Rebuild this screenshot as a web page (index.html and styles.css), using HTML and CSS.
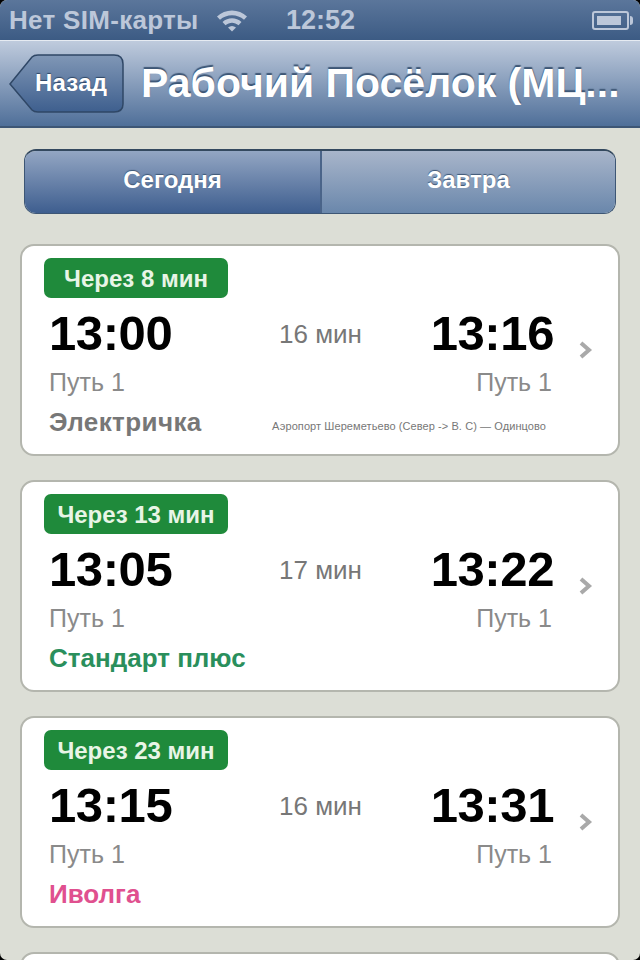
FILE: index.html
```html
<!DOCTYPE html>

<html>
  <head>
    <meta charset="utf-8" />
    <title>Расписание</title>
    <link rel="stylesheet" href="styles.css">
  </head>

  <body>
    <div class="screen">
      <div class="status">
        <div class="carrier">
          <span>Нет SIM-карты</span>
          <svg class="wifi" width="32" height="24" viewBox="0 0 32 24">
            <path d="M1 8.5C9 0.5 23 0.5 31 8.5L28 11.8C21.5 5.6 10.500 5.600 4 11.800Z" />
            <path d="M6.500 14C12 9 20 9 25.500 14L22.500 17.300C18.500 13.800 13.500 13.800 9.500 17.300Z" />
            <path d="M12 19.500C14.500 17.500 17.500 17.500 20 19.500L16 23.500Z" />
          </svg>
        </div>
        <div class="clock">12:52</div>
        <div class="battery"><div class="battery-level"></div></div>
      </div>

      <div class="nav">
        <div class="back">
          <svg class="back-shape" width="116" height="60" viewBox="0 0 116 60">
            <defs>
              <linearGradient id="backFill" x1="0" y1="0" x2="0" y2="1">
                <stop offset="0" stop-color="#8097b6" />
                <stop offset="1" stop-color="#3e5f8e" />
              </linearGradient>
            </defs>
            <path d="M1 30L23 3Q25 1 29 1H105Q114 1 114 10V50Q114 58 105 58H29Q25 58 23 56Z" fill="url(#backFill)" stroke="#2f4766" stroke-width="1.500" />
          </svg>
          <span class="back-label">Назад</span>
        </div>
        <div class="title">Рабочий Посёлок (МЦ...</div>
      </div>

      <div class="content">
        <div class="segments">
          <div class="segment segment-active">Сегодня</div>
          <div class="segment">Завтра</div>
        </div>

        <div class="card">
          <div class="card-main">
            <div class="badge">Через 8 мин</div>
            <div class="times">
              <div class="time">13:00</div>
              <div class="duration">16 мин</div>
              <div class="time time-end">13:16</div>
            </div>
            <div class="tracks">
              <div>Путь 1</div>
              <div>Путь 1</div>
            </div>
            <div class="train">
              <div class="train-type type-grey">Электричка</div>
              <div class="route">Аэропорт Шереметьево (Север -&gt; В. С) — Одинцово</div>
            </div>
          </div>
          <svg class="chevron" width="14" height="20" viewBox="0 0 14 20"><path d="M2 3L10 10L2 17" /></svg>
        </div>

        <div class="card">
          <div class="card-main">
            <div class="badge">Через 13 мин</div>
            <div class="times">
              <div class="time">13:05</div>
              <div class="duration">17 мин</div>
              <div class="time time-end">13:22</div>
            </div>
            <div class="tracks">
              <div>Путь 1</div>
              <div>Путь 1</div>
            </div>
            <div class="train">
              <div class="train-type type-green">Стандарт плюс</div>
            </div>
          </div>
          <svg class="chevron" width="14" height="20" viewBox="0 0 14 20"><path d="M2 3L10 10L2 17" /></svg>
        </div>

        <div class="card">
          <div class="card-main">
            <div class="badge">Через 23 мин</div>
            <div class="times">
              <div class="time">13:15</div>
              <div class="duration">16 мин</div>
              <div class="time time-end">13:31</div>
            </div>
            <div class="tracks">
              <div>Путь 1</div>
              <div>Путь 1</div>
            </div>
            <div class="train">
              <div class="train-type type-pink">Иволга</div>
            </div>
          </div>
          <svg class="chevron" width="14" height="20" viewBox="0 0 14 20"><path d="M2 3L10 10L2 17" /></svg>
        </div>

        <div class="card"></div>
      </div>
    </div>
  </body>
</html>
```

FILE: styles.css
```css
html,
body {
  margin: 0;
  height: 960px;
  overflow: hidden;
  background: #000;
}

body {
  font-family: "Liberation Sans", Arial, sans-serif;
}

.screen {
  width: 640px;
  height: 960px;
  overflow: hidden;
  border-radius: 7px;
  background: #dcded6;
}

/* Status bar */
.status {
  display: grid;
  grid-template-columns: 1fr auto 1fr;
  align-items: center;
  box-sizing: border-box;
  height: 40px;
  padding: 0 8px 0 9px;
  background: linear-gradient(#5b769b, #3c5b84);
  color: #bcc7d9;
  font-size: 26px;
  font-weight: bold;
}

.carrier {
  display: flex;
  align-items: center;
  gap: 17px;
}

.carrier span {
  letter-spacing: 0.3px;
}

.wifi {
  fill: #bcc7d9;
}

.clock {
  font-size: 27px;
}

.battery {
  justify-self: end;
  position: relative;
  box-sizing: border-box;
  width: 37px;
  height: 19px;
  margin-right: 3px;
  padding: 3px;
  border: 2px solid #bcc7d9;
  border-radius: 3px;
}

.battery::after {
  content: "";
  position: absolute;
  top: 3px;
  right: -6px;
  width: 3px;
  height: 9px;
  border-radius: 0 3px 3px 0;
  background: #bcc7d9;
}

.battery-level {
  width: 24px;
  height: 100%;
  background: #bcc7d9;
}

/* Navigation bar */
.nav {
  display: flex;
  align-items: center;
  gap: 17px;
  box-sizing: border-box;
  height: 88px;
  padding-left: 9px;
  border-top: 1px solid #e6ebf2;
  border-bottom: 2px solid #3d5675;
  background: linear-gradient(#bfcbdd, #4f6f99);
}

.back {
  position: relative;
  display: flex;
  align-items: center;
  flex-shrink: 0;
  box-sizing: border-box;
  width: 115px;
  height: 60px;
  padding-left: 26px;
}

.back-shape {
  position: absolute;
  top: 0;
  left: 0;
}

.back-label {
  position: relative;
  margin-bottom: 2px;
  color: #fff;
  font-size: 24px;
  font-weight: bold;
  letter-spacing: 0.2px;
  text-shadow: 0 -1px 1px #2f4766;
}

.title {
  color: #fff;
  font-size: 41px;
  font-weight: bold;
  white-space: nowrap;
  text-shadow: 0 -2px 1px #3d5675;
}

/* Today / tomorrow switch */
.content {
  display: flex;
  flex-direction: column;
  gap: 24px;
  padding: 21px 20px 0;
}

.segments {
  display: flex;
  box-sizing: border-box;
  height: 65px;
  margin: 0 4px 6px;
  border: 1px solid #3d5675;
  border-top: 2px solid #34495f;
  border-radius: 12px;
  overflow: hidden;
}

.segment {
  flex: 1;
  display: flex;
  align-items: center;
  justify-content: center;
  box-sizing: border-box;
  padding-bottom: 4px;
  background: linear-gradient(#a8b5ca, #6a87ab);
  color: #fff;
  font-size: 24px;
  font-weight: bold;
  text-shadow: 0 -1px 1px #3d5675;
}

.segment-active {
  flex: 0 0 297px;
  background: linear-gradient(#93a6c3, #3e5e8f);
  border-right: 2px solid #4a6489;
}

/* Train cards */
.card {
  display: flex;
  align-items: center;
  box-sizing: border-box;
  flex-shrink: 0;
  height: 212px;
  padding: 12px 25px 0 22px;
  border: 2px solid #b4b6ae;
  border-radius: 14px;
  background: #fff;
}

.card-main {
  flex: 1;
  align-self: flex-start;
  margin-right: 25px;
}

.chevron {
  margin-top: -12px;
  fill: none;
  stroke: #a9a9a9;
  stroke-width: 4;
}

.badge {
  width: 184px;
  height: 40px;
  border-radius: 7px;
  background: #1f8a3b;
  color: #e8f5e6;
  font-size: 24px;
  font-weight: bold;
  line-height: 42px;
  text-align: center;
}

.times {
  display: grid;
  grid-template-columns: 230px auto 1fr;
  align-items: center;
  padding: 6px 0 0 5px;
  height: 58px;
}

.time {
  color: #000;
  font-size: 49px;
  font-weight: bold;
  letter-spacing: -0.4px;
}

.time-end {
  text-align: right;
}

.duration {
  padding-top: 2px;
  color: #777;
  font-size: 26px;
}

.tracks {
  display: flex;
  justify-content: space-between;
  padding: 2px 2px 0 5px;
  color: #8a8a8a;
  font-size: 25px;
  line-height: 36px;
}

.train {
  display: flex;
  align-items: center;
  justify-content: space-between;
  padding: 5px 8px 0 5px;
  height: 34px;
}

.train-type {
  font-size: 26px;
  font-weight: bold;
}

.type-grey {
  color: #777;
  letter-spacing: 0.4px;
}

.type-green {
  color: #2a8f5c;
}

.type-pink {
  color: #e0508f;
}

.route {
  padding-top: 8px;
  color: #777;
  font-size: 11px;
  letter-spacing: 0.08px;
}
```
